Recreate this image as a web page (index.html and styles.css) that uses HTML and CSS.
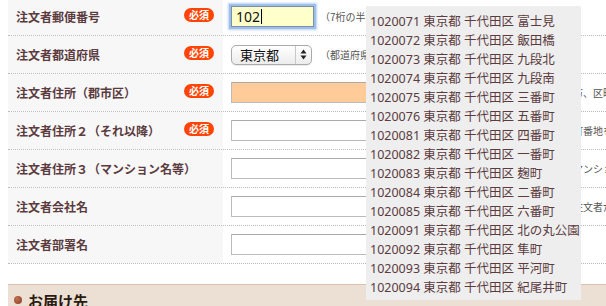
FILE: index.html
```html
<!DOCTYPE html>
<html lang="ja">
<head>
    <meta charset="UTF-8">
    <title>注文者情報</title>
    <link rel="stylesheet" href="styles.css">
</head>
<body>
    <div class="form">
        <div class="row">
            <div class="label"><span>注文者郵便番号</span><span class="req">必須</span></div>
            <div class="field">
                <span class="zip-box">102<span class="caret"></span></span>
                <span class="note note-zip">（7桁の半角数字）</span>
            </div>
        </div>
        <div class="row">
            <div class="label"><span>注文者都道府県</span><span class="req">必須</span></div>
            <div class="field">
                <span class="select">
                    <span class="select-text">東京都</span>
                    <span class="select-arrows">
                        <svg width="7" height="11" viewBox="0 0 7 11"><path d="M3.5 0.5 L6.5 4.5 H0.5 Z M3.5 10.5 L6.5 6.5 H0.5 Z" fill="#222"/></svg>
                    </span>
                </span>
                <span class="note">（都道府県を選択）</span>
            </div>
        </div>
        <div class="row">
            <div class="label"><span>注文者住所（郡市区）</span><span class="req">必須</span></div>
            <div class="field">
                <input type="text" class="text-input text-input-auto">
                <span class="note">（市、区町村名）</span>
            </div>
        </div>
        <div class="row">
            <div class="label"><span>注文者住所２（それ以降）</span><span class="req">必須</span></div>
            <div class="field">
                <input type="text" class="text-input">
                <span class="note">（町番地を入力）</span>
            </div>
        </div>
        <div class="row">
            <div class="label"><span>注文者住所３（マンション名等）</span></div>
            <div class="field">
                <input type="text" class="text-input">
                <span class="note">（マンション名）</span>
            </div>
        </div>
        <div class="row">
            <div class="label"><span>注文者会社名</span></div>
            <div class="field">
                <input type="text" class="text-input">
                <span class="note">（注文者が会社の場合）</span>
            </div>
        </div>
        <div class="row">
            <div class="label"><span>注文者部署名</span></div>
            <div class="field">
                <input type="text" class="text-input">
            </div>
        </div>

        <div class="zip-suggest">
            <div class="suggest-item">1020071 東京都 千代田区 富士見</div>
            <div class="suggest-item">1020072 東京都 千代田区 飯田橋</div>
            <div class="suggest-item">1020073 東京都 千代田区 九段北</div>
            <div class="suggest-item">1020074 東京都 千代田区 九段南</div>
            <div class="suggest-item">1020075 東京都 千代田区 三番町</div>
            <div class="suggest-item">1020076 東京都 千代田区 五番町</div>
            <div class="suggest-item">1020081 東京都 千代田区 四番町</div>
            <div class="suggest-item">1020082 東京都 千代田区 一番町</div>
            <div class="suggest-item">1020083 東京都 千代田区 麹町</div>
            <div class="suggest-item">1020084 東京都 千代田区 二番町</div>
            <div class="suggest-item">1020085 東京都 千代田区 六番町</div>
            <div class="suggest-item">1020091 東京都 千代田区 北の丸公園</div>
            <div class="suggest-item">1020092 東京都 千代田区 隼町</div>
            <div class="suggest-item">1020093 東京都 千代田区 平河町</div>
            <div class="suggest-item">1020094 東京都 千代田区 紀尾井町</div>
        </div>
    </div>

    <div class="section-head">
        <span class="dot"></span>
        <h3>お届け先</h3>
    </div>
</body>
</html>
```

FILE: styles.css
```css
body {
    margin: 0;
    font-family: "Noto Sans CJK JP", sans-serif;
    background: #fff;
    overflow: hidden;
}
.form {
    position: relative;
    margin: -2px 0 0 8px;
}
.row {
    display: grid;
    grid-template-columns: 215px 1fr;
    height: 38px;
    box-sizing: border-box;
    border-bottom: 1px dotted #bbb;
}
.label {
    background: #f7f7f7;
    display: flex;
    align-items: center;
    justify-content: space-between;
    padding: 0 9px 0 8px;
    font-size: 12px;
    font-weight: bold;
    color: #5b3b3e;
    white-space: nowrap;
}
.req {
    background: #ff4405;
    color: #fff;
    font-size: 10px;
    font-weight: bold;
    line-height: 14px;
    height: 14px;
    padding: 0 5px;
    border-radius: 7px;
    margin-top: -3px;
}
.field {
    display: flex;
    align-items: center;
    padding-left: 8px;
    white-space: nowrap;
}
.zip-box {
    display: inline-flex;
    align-items: center;
    box-sizing: border-box;
    width: 83px;
    height: 21px;
    padding-left: 4px;
    background: #ffffcc;
    border: 1px solid #7b8fa8;
    box-shadow: 0 0 0 2px #9cc0ea, 0 0 2px 3px rgba(120, 165, 225, 0.5);
    font-family: "Noto Sans", sans-serif;
    font-size: 14px;
    color: #111;
}
.caret {
    display: inline-block;
    width: 1px;
    height: 15px;
    background: #000;
    margin-left: 1px;
}
.note {
    font-size: 10px;
    color: #555;
    margin-left: 2px;
}
.note-zip {
    margin-left: 6px;
}
.select {
    display: inline-flex;
    align-items: center;
    box-sizing: border-box;
    width: 81px;
    height: 20px;
    border: 1px solid #aaa;
    border-radius: 5px;
    background: linear-gradient(#ffffff, #ececec);
    box-shadow: 0 1px 1px rgba(0, 0, 0, 0.08);
    margin-right: 6px;
}
.select-text {
    flex: 1;
    padding-left: 8px;
    font-size: 13px;
    color: #111;
}
.select-arrows {
    display: flex;
    align-items: center;
    justify-content: center;
    width: 15px;
    height: 18px;
    border-left: 1px solid #c8c8c8;
}
.text-input {
    box-sizing: border-box;
    width: 330px;
    height: 21px;
    margin: 0;
    border: 1px solid #bbb;
    border-top-color: #aaa;
    background: #fff;
    padding: 0 4px;
}
.text-input-auto {
    background: #ffcc99;
}
.zip-suggest {
    position: absolute;
    left: 358px;
    top: 8px;
    width: 215px;
    height: 294px;
    box-sizing: border-box;
    padding: 6px 4px 0;
    background: #eeeeee;
}
.suggest-item {
    font-family: "Noto Sans", "Noto Sans CJK JP", sans-serif;
    font-size: 12.5px;
    line-height: 19px;
    color: #5b3b3e;
    white-space: nowrap;
}
.section-head {
    display: flex;
    align-items: center;
    gap: 6px;
    margin: 20px 0 0 8px;
    height: 30px;
    padding-left: 6px;
    background: #ece0d5;
    border-top: 1px solid #d8c2af;
}
.dot {
    width: 8px;
    height: 8px;
    border-radius: 50%;
    background: radial-gradient(circle at 35% 35%, #c07050, #8e3c24);
}
.section-head h3 {
    margin: 0;
    font-size: 15px;
    font-weight: bold;
    color: #2b1a10;
}
```
